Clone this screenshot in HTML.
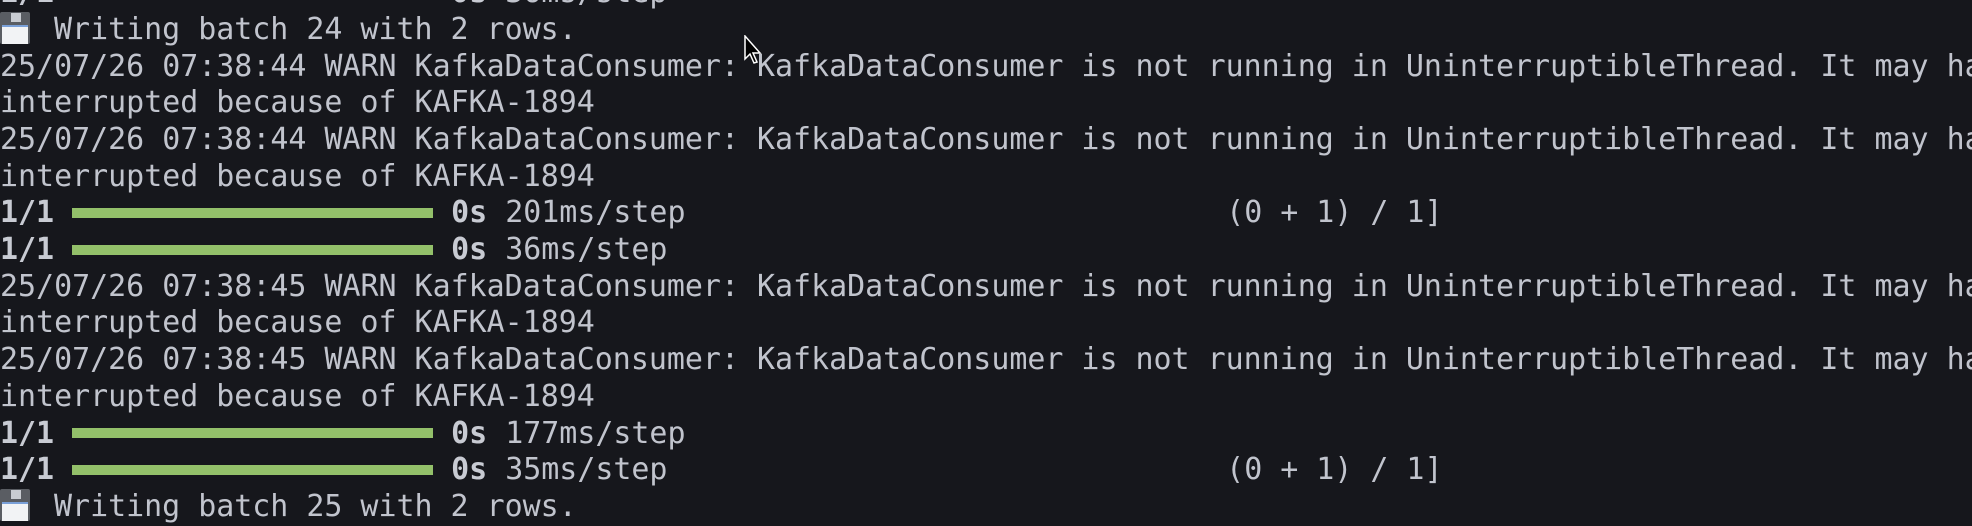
<!DOCTYPE html>
<html><head><meta charset="utf-8"><style>
html,body{margin:0;padding:0;background:#16171c;width:1972px;height:506px;overflow:hidden}
.l{position:absolute;left:0;height:36.7px;line-height:36.7px;white-space:pre;font-family:"DejaVu Sans Mono","Liberation Mono",monospace;font-size:29.95px;color:#c1c4cd}
b{font-weight:bold;color:#c8cbd3}
.bar{display:inline-block;width:361px;height:10px;background:#93c06a;vertical-align:middle;position:relative;top:-1px}
.fl{display:inline-block;width:30px;height:32px;background:#5a5d63;border-radius:2px;position:relative;vertical-align:middle;top:-2px;margin-right:6px}
.fl:before{content:"";position:absolute;left:11px;top:1px;width:10px;height:9px;background:#c9ccd2}
.fl:after{content:"";position:absolute;left:2px;top:13px;width:26px;height:17px;background:#f2f3f5;border-top:2px solid #7aa0d8}
</style></head><body>
<div class="l" style="top:-24.9px"><b>1/1</b> <span class="bar"></span> <b>0s</b> 36ms/step</div>
<div class="l" style="top:11.8px"><span class="fl"></span> Writing batch 24 with 2 rows.</div>
<div class="l" style="top:48.5px">25/07/26 07:38:44 WARN KafkaDataConsumer: KafkaDataConsumer is not running in UninterruptibleThread. It may ha</div>
<div class="l" style="top:85.2px">interrupted because of KAFKA-1894</div>
<div class="l" style="top:121.9px">25/07/26 07:38:44 WARN KafkaDataConsumer: KafkaDataConsumer is not running in UninterruptibleThread. It may ha</div>
<div class="l" style="top:158.6px">interrupted because of KAFKA-1894</div>
<div class="l" style="top:195.3px"><b>1/1</b> <span class="bar"></span> <b>0s</b> 201ms/step                              (0 + 1) / 1]</div>
<div class="l" style="top:232.0px"><b>1/1</b> <span class="bar"></span> <b>0s</b> 36ms/step</div>
<div class="l" style="top:268.7px">25/07/26 07:38:45 WARN KafkaDataConsumer: KafkaDataConsumer is not running in UninterruptibleThread. It may ha</div>
<div class="l" style="top:305.4px">interrupted because of KAFKA-1894</div>
<div class="l" style="top:342.1px">25/07/26 07:38:45 WARN KafkaDataConsumer: KafkaDataConsumer is not running in UninterruptibleThread. It may ha</div>
<div class="l" style="top:378.8px">interrupted because of KAFKA-1894</div>
<div class="l" style="top:415.5px"><b>1/1</b> <span class="bar"></span> <b>0s</b> 177ms/step</div>
<div class="l" style="top:452.2px"><b>1/1</b> <span class="bar"></span> <b>0s</b> 35ms/step                               (0 + 1) / 1]</div>
<div class="l" style="top:488.9px"><span class="fl"></span> Writing batch 25 with 2 rows.</div>
<svg style="position:absolute;left:744px;top:35px" width="22" height="32" viewBox="0 0 22 32"><path d="M1 1 L1 24 L6 19 L10 28 L13 27 L9 18 L16 18 Z" fill="#000" stroke="#fff" stroke-width="1.5"/></svg>
</body></html>
